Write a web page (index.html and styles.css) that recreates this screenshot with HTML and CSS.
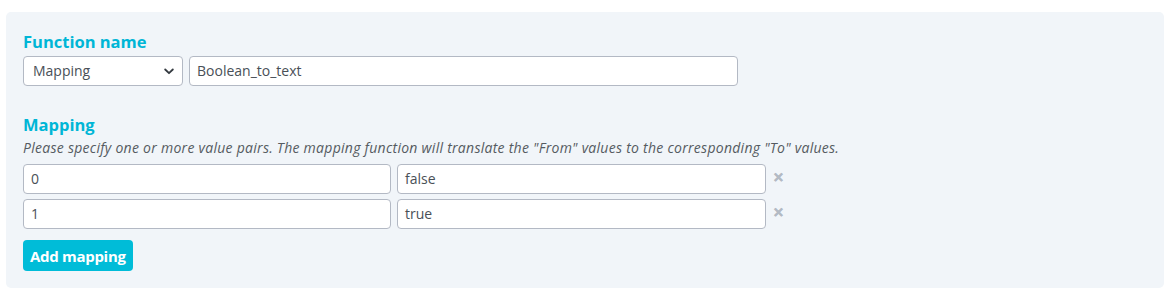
FILE: index.html
```html
<!DOCTYPE html>
<html lang="en">
<head>
<meta charset="utf-8">
<title>Function editor</title>
<link rel="stylesheet" href="styles.css">
</head>
<body>
<div class="panel">
  <div class="section">
    <div class="label">Function name</div>
    <div class="row">
      <div class="select">
        <span class="select-value">Mapping</span>
        <svg class="chevron" width="10" height="7" viewBox="0 0 10 7"><path d="M1.2 1.5 L5 5.2 L8.8 1.5" fill="none" stroke="#343a40" stroke-width="1.8" stroke-linecap="round" stroke-linejoin="round"/></svg>
      </div>
      <div class="input name-input">Boolean_to_text</div>
    </div>
  </div>
  <div class="section mapping">
    <div class="label">Mapping</div>
    <div class="hint">Please specify one or more value pairs. The mapping function will translate the "From" values to the corresponding "To" values.</div>
    <div class="pairs">
      <div class="pair">
        <div class="input pair-input">0</div>
        <div class="input pair-input">false</div>
        <span class="remove">&#x2715;</span>
      </div>
      <div class="pair">
        <div class="input pair-input">1</div>
        <div class="input pair-input">true</div>
        <span class="remove">&#x2715;</span>
      </div>
    </div>
    <button class="btn">Add mapping</button>
  </div>
</div>
</body>
</html>
```
FILE: styles.css
```css
* { box-sizing: border-box; }
html, body { margin: 0; background: #ffffff; }
body {
  padding: 12px 7px 0 6px;
  font-family: "Segoe UI", "Open Sans", "Noto Sans", sans-serif;
  color: #495057;
}
.panel {
  width: 1158px;
  height: 276px;
  background: #f1f5f9;
  border-radius: 5px;
  padding: 20px 17px 17px 17px;
}
.label {
  font-size: 16.5px;
  line-height: 20px;
  font-weight: 700;
  color: #00b6d6;
}
.row {
  display: flex;
  gap: 6px;
  margin-top: 4px;
}
.select, .input {
  height: 30px;
  background: #fff;
  border: 1px solid #b3b9c4;
  border-radius: 4px;
  font-size: 14px;
  line-height: 28px;
  padding: 0 7px;
  color: #495057;
}
.select {
  width: 160px;
  display: flex;
  align-items: center;
  justify-content: space-between;
  padding: 0 8px 0 9px;
}
.chevron { display: block; }
.name-input { width: 549px; }
.mapping { margin-top: 29px; }
.hint {
  font-size: 14px;
  line-height: 18px;
  font-style: italic;
  color: #555b61;
  margin-top: 4px;
  letter-spacing: 0.27px;
}
.pairs {
  display: flex;
  flex-direction: column;
  gap: 5px;
  margin-top: 7px;
}
.pair {
  display: flex;
  align-items: center;
  gap: 6px;
}
.pair-input { width: 368px; }
.pair-input + .pair-input { width: 369px; }
.remove {
  font-size: 13px;
  color: #b3bac4;
  margin-left: 1px;
  margin-top: -5px;
  font-weight: 700;
  -webkit-text-stroke: 0.4px #b3bac4;
}
.btn {
  display: block;
  margin-top: 11px;
  height: 31px;
  padding: 0 7px;
  border: none;
  border-radius: 4px;
  background: #00bcd8;
  color: #fff;
  font-family: inherit;
  font-size: 15px;
  font-weight: 700;
  letter-spacing: -0.3px;
}
```
